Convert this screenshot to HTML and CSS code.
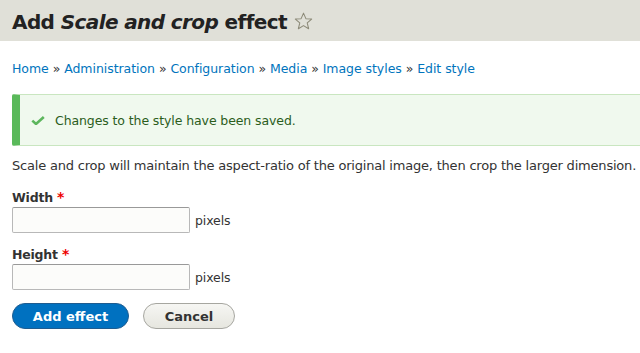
FILE: index.html
```html
<!DOCTYPE html>
<html lang="en">
<head>
<meta charset="utf-8">
<title>Add Scale and crop effect</title>
<link rel="stylesheet" href="styles.css">
</head>
<body>
<header class="page-header">
  <h1 class="page-title">Add <em>Scale and crop</em> effect
    <svg class="star" viewBox="0 0 20 20" width="19" height="19" aria-hidden="true"><path d="M10 1.2 L12.5 7 L18.6 7.4 L13.9 11.4 L15.4 17.6 L10 14.3 L4.6 17.6 L6.1 11.4 L1.4 7.4 L7.5 7 Z" fill="none" stroke="#8c8a78" stroke-width="1.1" stroke-linejoin="round"/></svg>
  </h1>
</header>
<main class="content">
  <nav class="breadcrumb">
    <a href="#">Home</a> » <a href="#">Administration</a> » <a href="#">Configuration</a> » <a href="#">Media</a> » <a href="#">Image styles</a> » <a href="#">Edit style</a>
  </nav>
  <div class="messages">
    <svg class="check" viewBox="0 0 14 9" width="14" height="9" aria-hidden="true"><path d="M1.3 4.6 L5 8 L12.8 1" fill="none" stroke="#5db65d" stroke-width="2.6"/></svg>
    <span>Changes to the style have been saved.</span>
  </div>
  <p class="description">Scale and crop will maintain the aspect-ratio of the original image, then crop the larger dimension.</p>
  <div class="field">
    <label class="label">Width <span class="req">*</span></label>
    <div class="input-row"><input class="text-input" type="text"><span class="suffix">pixels</span></div>
  </div>
  <div class="field">
    <label class="label">Height <span class="req">*</span></label>
    <div class="input-row"><input class="text-input" type="text"><span class="suffix">pixels</span></div>
  </div>
  <div class="actions">
    <button class="btn btn-primary" type="button">Add effect</button>
    <button class="btn btn-secondary" type="button">Cancel</button>
  </div>
</main>
</body>
</html>
```

FILE: styles.css
```css
html, body {
  margin: 0;
  padding: 0;
  background: #fff;
}
body {
  font-family: "DejaVu Sans", Verdana, sans-serif;
  font-size: 13px;
  color: #333;
  overflow: hidden;
}
.page-header {
  background: #e0e0d8;
  height: 41px;
  padding: 0 12px;
  box-sizing: border-box;
}
.page-title {
  margin: 0;
  font-size: 20px;
  font-weight: bold;
  color: #222;
  line-height: 44px;
  letter-spacing: -0.6px;
  white-space: nowrap;
}
.page-title em {
  font-style: italic;
}
.star {
  vertical-align: -2px;
  margin-left: 1px;
}
.content {
  padding: 0 0 0 12px;
}
.breadcrumb {
  margin-top: 20px;
  line-height: 16px;
  font-size: 12.5px;
  color: #333;
  letter-spacing: -0.05px;
  white-space: nowrap;
}
.breadcrumb a {
  color: #0074bd;
  text-decoration: none;
}
.messages {
  margin-top: 17px;
  height: 50px;
  box-sizing: content-box;
  border: 1px solid #c9e6c0;
  border-right: none;
  border-left: 8px solid #5ab95a;
  background: #f0f9ee;
  display: flex;
  align-items: center;
  padding-left: 11px;
  color: #2b5d1c;
  font-size: 12.5px;
  letter-spacing: -0.1px;
  border-radius: 2px 0 0 2px;
}
.check {
  margin-right: 10px;
  margin-top: 1px;
}
.description {
  margin: 12px 0 0;
  line-height: 16px;
  font-size: 13px;
  letter-spacing: -0.2px;
  white-space: nowrap;
}
.field {
  margin-top: 15px;
}
.field + .field {
  margin-top: 13px;
}
.label {
  display: block;
  font-weight: bold;
  font-size: 12.5px;
  line-height: 16px;
  letter-spacing: -0.2px;
}
.req {
  color: #e00;
  font-size: 14px;
}
.input-row {
  display: flex;
  align-items: center;
  margin-top: 1px;
}
.text-input {
  width: 178px;
  height: 26px;
  box-sizing: border-box;
  border: 1px solid #b8b8b8;
  border-top-color: #999;
  border-radius: 2px;
  background: #fcfcfa;
  margin: 0;
  padding: 0 6px;
  font: inherit;
}
.suffix {
  margin-left: 5px;
  margin-top: 1px;
  font-size: 12.5px;
  letter-spacing: -0.1px;
}
.actions {
  display: flex;
  gap: 14px;
  margin-top: 13px;
}
.btn {
  height: 26px;
  box-sizing: border-box;
  border-radius: 13px;
  font-family: "DejaVu Sans", Verdana, sans-serif;
  font-weight: bold;
  font-size: 13px;
  padding: 0;
  margin: 0;
  cursor: pointer;
  letter-spacing: 0;
}
.btn-primary {
  width: 117px;
  background: #0071c0;
  border: 1px solid #1e5c90;
  color: #fff;
}
.btn-secondary {
  width: 92px;
  background: linear-gradient(#f6f6f3, #e6e6df);
  border: 1px solid #a6a6a0;
  color: #333;
}
```
